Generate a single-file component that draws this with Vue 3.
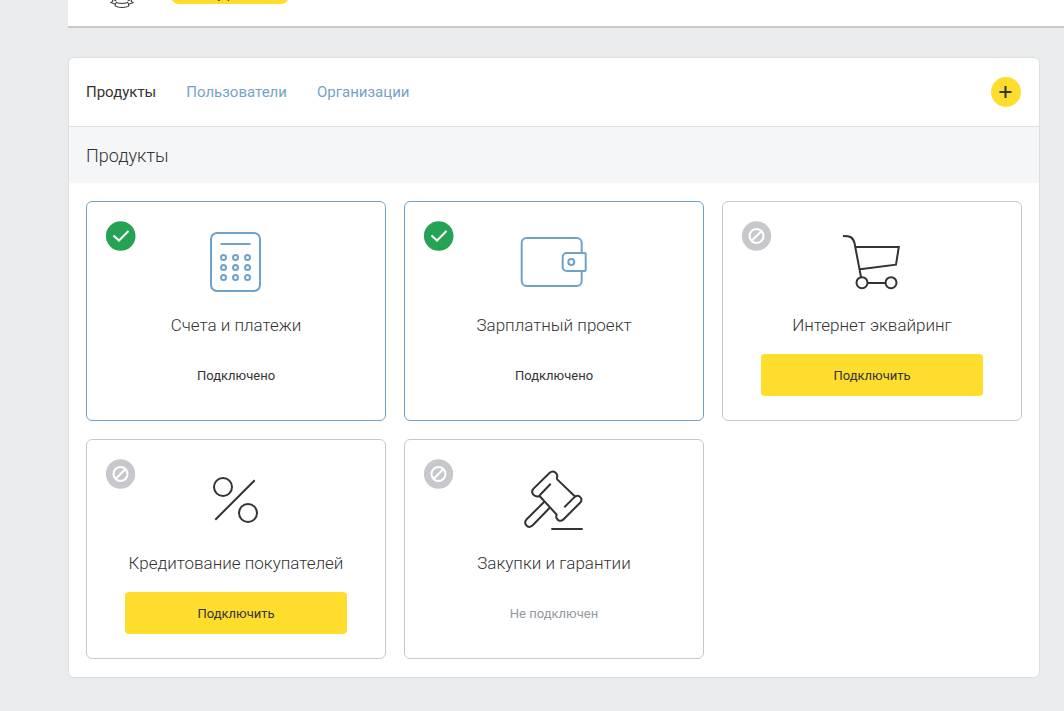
<script setup>
import { ref } from 'vue'

const tabs = ['Продукты', 'Пользователи', 'Организации']
const activeTab = ref('Продукты')

const products = [
  { id: 'accounts', title: 'Счета и платежи', state: 'on', status: 'Подключено' },
  { id: 'salary', title: 'Зарплатный проект', state: 'on', status: 'Подключено' },
  { id: 'acquiring', title: 'Интернет эквайринг', state: 'off', action: 'Подключить' },
  { id: 'credit', title: 'Кредитование покупателей', state: 'off', action: 'Подключить' },
  { id: 'tenders', title: 'Закупки и гарантии', state: 'off', status: 'Не подключен' },
]
</script>

<template>
  <div class="page">
    <header class="topbar">
      <svg class="crest" viewBox="0 0 28 42" aria-hidden="true">
        <path d="M4 4h20v14c0 7-5 10-10 13C9 28 4 25 4 18z" />
        <path d="M8 36.500c4 1.200 8 1.200 12 0l1 3.500c-4.500 2-9.500 2-14 0z" />
        <path d="M8 38.500l-5.500-2 2.500-1-1-2.500 4.500 2M20 38.500l5.500-2-2.500-1 1-2.500-4.500 2" />
      </svg>
      <button class="topbar-button" type="button">Смену режима</button>
    </header>

    <main class="panel">
      <div class="panel-head">
        <nav class="tabs">
          <a
            v-for="tab in tabs"
            :key="tab"
            href="#"
            class="tab"
            :class="{ active: tab === activeTab }"
            @click.prevent="activeTab = tab"
          >{{ tab }}</a>
        </nav>
        <button class="add" type="button" aria-label="Добавить">
          <svg viewBox="0 0 30 30" aria-hidden="true"><path d="M8.500 15h12M14.500 9v12" /></svg>
        </button>
      </div>

      <h1 class="section-title">Продукты</h1>

      <div class="grid">
        <article v-for="p in products" :key="p.id" class="card" :class="p.state">
          <svg v-if="p.state === 'on'" class="badge" viewBox="0 0 30 30" aria-hidden="true">
            <circle cx="14.700" cy="15" r="14.800" />
            <path d="M7.500 14.500l5.500 5 9.500-9.500" />
          </svg>
          <svg v-else class="badge" viewBox="0 0 30 30" aria-hidden="true">
            <circle cx="14.500" cy="15" r="14.700" />
            <path d="M21.500 15a7 7 0 1 1-14 0a7 7 0 1 1 14 0zM19.300 10.200l-9.600 9.600" />
          </svg>

          <svg class="icon" viewBox="0 0 80 80" aria-hidden="true">
            <template v-if="p.id === 'accounts'">
              <rect x="15" y="11" width="49" height="58" rx="6" />
              <path d="M24.500 22h30" />
              <template v-for="y in [35.5, 45.5, 55.5]" :key="y">
                <circle v-for="x in [27.5, 39.5, 51.5]" :key="x" :cx="x" :cy="y" r="2.500" />
              </template>
            </template>
            <template v-else-if="p.id === 'salary'">
              <rect x="7.700" y="16" width="60" height="48" rx="5" />
              <path class="solid" d="M52.700 31h18a1 1 0 0 1 1 1v16a1 1 0 0 1-1 1h-18a4 4 0 0 1-4-4V35a4 4 0 0 1 4-4z" />
              <circle cx="57.300" cy="40" r="3" />
            </template>
            <template v-else-if="p.id === 'acquiring'">
              <path d="M11 14c7 0 10 1 11.500 7L29 55M23.500 25h43.300l-2.800 17.700L28 47.300M36 61h17.500" />
              <circle cx="30" cy="60.700" r="5.500" />
              <circle cx="59" cy="60.700" r="5.500" />
            </template>
            <template v-else-if="p.id === 'credit'">
              <circle cx="27" cy="27" r="9" />
              <circle cx="52" cy="53" r="9" />
              <path d="M58.700 20.300L19.300 59.700" />
            </template>
            <template v-else>
              <path d="M35.700 12.800c3.600-3 8.600.2 7.300 4.700-.3 1 0 1.700.7 2.400L61 36.500c4.500-2.200 8.300 2.300 5.300 6L49.600 59.300c-3.500 3.400-8.600.3-7-4.800L25.500 36c-5 1.800-9.500-3-6.200-7.200z" />
              <path d="M36.700 23.700l-11 11.500M50.300 47.300L61 36.600" />
              <path d="M30.300 41.700L12.700 59.300c-3.800 4 .9 10.200 5.800 6.200l17.200-17.800M37.300 69h31.400" />
            </template>
          </svg>

          <h2 class="card-title">{{ p.title }}</h2>
          <button v-if="p.action" type="button" class="connect">{{ p.action }}</button>
          <p v-else class="status">{{ p.status }}</p>
        </article>
      </div>
    </main>
  </div>
</template>

<style>
body {
  background: #eaebed;
}
</style>

<style scoped>
.page {
  padding-left: 68px;
  overflow: hidden;
  font-family: Roboto, "Open Sans", sans-serif;
  color: #333;
}

.page *,
.page *::before {
  box-sizing: border-box;
}

button {
  border: 0;
  padding: 0;
  font: inherit;
  color: inherit;
  background: #ffdd2d;
  cursor: pointer;
}

.topbar {
  display: flex;
  align-items: flex-end;
  gap: 35px;
  height: 80px;
  margin-top: -52px;
  padding: 0 0 18px 40px;
  background: #fff;
  border-bottom: 2px solid #c8c9cc;
}

.crest {
  width: 28px;
  height: 42px;
  fill: none;
  stroke: #333;
  stroke-width: 1;
}

.topbar-button {
  min-width: 118px;
  height: 20px;
  margin-bottom: 4px;
  border-radius: 8px;
  font-size: 13px;
  line-height: 20px;
}

.panel {
  margin: 29px 24px 33px 0;
  background: #fff;
  border: 1px solid #dddfe0;
  border-radius: 6px;
  overflow: hidden;
}

.panel-head {
  display: flex;
  align-items: center;
  justify-content: space-between;
  height: 69px;
  padding: 0 18px 0 17px;
  border-bottom: 1px solid #dddfe0;
}

.tabs {
  display: flex;
  gap: 30px;
}

.tab {
  font-size: 15px;
  line-height: 20px;
  color: #75a3c7;
  text-decoration: none;
}

.tab.active {
  color: #333;
}

.add {
  width: 30px;
  height: 30px;
  border-radius: 50%;
}

.add svg {
  display: block;
  width: 30px;
  height: 30px;
  fill: none;
  stroke: #333;
  stroke-width: 2;
}

.section-title {
  margin: 0;
  padding: 1px 17px 0;
  font-size: 18px;
  font-weight: 300;
  line-height: 55px;
  background: #f5f6f8;
}

.grid {
  display: grid;
  grid-template-columns: repeat(3, 1fr);
  gap: 18px;
  padding: 18px 17px;
}

.card {
  position: relative;
  display: flex;
  flex-direction: column;
  align-items: center;
  padding: 20px 38px 24px;
  border: 1px solid #c7c8cc;
  border-radius: 6px;
}

.card.on {
  border-color: #70a2c9;
}

.badge {
  position: absolute;
  top: 19px;
  left: 19px;
  width: 30px;
  height: 30px;
  fill: #c7c8cc;
}

.on .badge {
  fill: #25a355;
}

.badge path {
  fill: none;
  stroke: #fff;
  stroke-width: 2;
}

.icon {
  width: 80px;
  height: 80px;
  fill: none;
  stroke: #333;
  stroke-width: 2;
}

.on .icon {
  stroke: #70a2c9;
}

.icon .solid {
  fill: #fff;
}

.card-title {
  margin: 11px 0 17px;
  font-size: 17px;
  font-weight: 300;
  line-height: 24px;
  white-space: nowrap;
}

.connect {
  width: 100%;
  height: 42px;
  border-radius: 4px;
  font-size: 13px;
}

.status {
  margin: 0;
  padding-top: 1px;
  font-size: 13px;
  line-height: 41px;
}

.off .status {
  color: #9299a2;
}
</style>
